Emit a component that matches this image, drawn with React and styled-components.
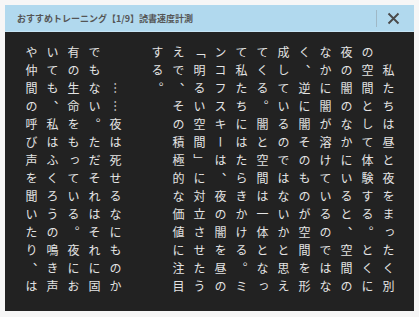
import React from "react";
import styled, { createGlobalStyle } from "styled-components";

const GlobalStyle = createGlobalStyle`
  html, body {
    margin: 0;
    padding: 0;
    background: #f6f6f6;
  }
  body {
    font-family: "Noto Sans CJK JP", "Noto Sans", sans-serif;
  }
`;

const Window = styled.div`
  margin: 5px;
  width: 409px;
  height: 306px;
  display: flex;
  flex-direction: column;
  background: #222222;
`;

const Header = styled.div`
  height: 26px;
  flex: 0 0 auto;
  display: flex;
  align-items: center;
  padding: 0 5px 0 12px;
  background: #b1d9ee;
  border-bottom: 1px solid #c6e4f4;
`;

const Title = styled.div`
  flex: 1;
  font-family: "Noto Sans CJK JP", sans-serif;
  font-size: 9px;
  font-weight: 700;
  color: #555555;
  letter-spacing: 0;
  white-space: nowrap;
`;

const Divider = styled.div`
  width: 1px;
  height: 17px;
  background: #9fb8c6;
`;

const CloseButton = styled.button`
  width: 32px;
  height: 26px;
  border: 0;
  padding: 0;
  background: transparent;
  display: flex;
  align-items: center;
  justify-content: center;
  cursor: pointer;
`;

const Body = styled.div`
  flex: 1;
  padding: 14px 15px 0 16px;
  overflow: hidden;
`;

const Text = styled.div`
  writing-mode: vertical-rl;
  height: 252px;
  font-family: "Noto Sans CJK JP", sans-serif;
  font-size: 12px;
  letter-spacing: 6px;
  line-height: 21px;
  color: #e4e4e4;
`;

const Line = styled.div`
  white-space: pre;
`;

const lines = [
  "\u3000私たちは昼と夜をまったく別",
  "の空間として体験する。とくに",
  "夜の闇のなかにいると、空間の",
  "なかに闇が溶けているのではな",
  "く、逆に闇そのものが空間を形",
  "成しているのではないかと思え",
  "てくる。闇と空間は一体となっ",
  "て私たちにはたらきかける。ミ",
  "ンコフスキーは、夜の闇を昼の",
  "「明るい空間」に対立させたう",
  "えで、その積極的な価値に注目",
  "する。",
  "\u3000",
  "\u3000\u3000……夜は死せるなにものか",
  "でもない。ただそれはそれに固",
  "有の生命をもっている。夜にお",
  "いても、私はふくろうの鳴き声",
  "や仲間の呼び声を聞いたり、は",
];

export default function App() {
  return (
    <>
      <GlobalStyle />
      <Window>
        <Header>
          <Title>おすすめトレーニング【1/9】読書速度計測</Title>
          <Divider />
          <CloseButton aria-label="閉じる">
            <svg width="13" height="13" viewBox="0 0 13 13">
              <path d="M1.5 1.5 L11.5 11.5 M11.5 1.5 L1.5 11.5" stroke="#4a4a4a" strokeWidth="1.9" fill="none" />
            </svg>
          </CloseButton>
        </Header>
        <Body>
          <Text>
            {lines.map((l, i) => (
              <Line key={i}>{l}</Line>
            ))}
          </Text>
        </Body>
      </Window>
    </>
  );
}
